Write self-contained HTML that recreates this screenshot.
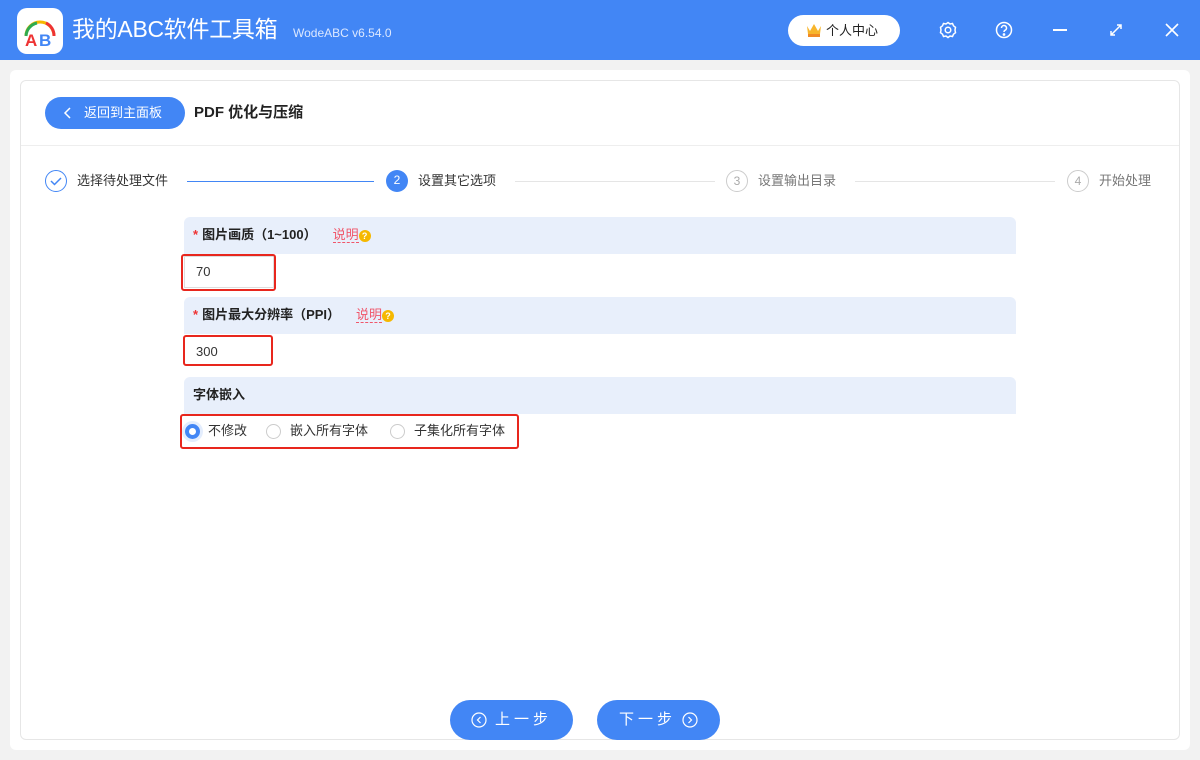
<!DOCTYPE html>
<html><head><meta charset="utf-8"><style>
*{margin:0;padding:0;box-sizing:border-box}
body{width:1200px;height:760px;background:#f2f2f2;font-family:"Liberation Sans","Noto Sans CJK SC",sans-serif;position:relative;overflow:hidden;color:#333}
.top{position:absolute;left:0;top:0;width:1200px;height:60px;background:#4286f5}
.abs{position:absolute;line-height:1.2}
.panel{position:absolute;left:10px;top:70px;width:1180px;height:680px;background:#fff;border-radius:6px}
.card{position:absolute;left:20px;top:80px;width:1160px;height:660px;border:1px solid #e6e6e6;border-radius:6px;background:#fff}
.sec{position:absolute;left:184px;width:832px;height:37px;background:#e8effb;border-radius:6px 6px 0 0;font-size:13px;font-weight:bold;padding:10px 0 0 9px;color:#222;line-height:1.2}
.sec .st{color:#e33;margin-right:4px}
.sec .sm{color:#f0566a;font-weight:normal;border-bottom:1px dashed #f0566a;margin-left:16px}
.q{display:inline-block;width:12px;height:12px;border-radius:50%;background:#f5b800;color:#fff;font-size:9px;text-align:center;line-height:12px;vertical-align:middle}
.red{position:absolute;border:2px solid #e8261d;border-radius:3px}
.inp{font-size:13px;color:#333}
.circ{position:absolute;width:22px;height:22px;border-radius:50%;font-size:12px;text-align:center;line-height:20px}
.step{position:absolute;top:173px;font-size:13px;line-height:16px}
.btn{position:absolute;top:700px;height:40px;width:123px;border-radius:20px;background:#4286f5;color:#fff;font-size:15px;line-height:40px;letter-spacing:4px}
.radio{position:absolute;top:424px;width:15px;height:15px;border-radius:50%;border:1px solid #ccc}
</style></head><body>
<div class="top"></div>
<div class="abs" style="left:17px;top:8px;width:46px;height:46px;background:#fff;border-radius:10px">
<svg width="46" height="46"><path d="M9 28 A14 14 0 0 1 37 28" fill="none" stroke="#f5b800" stroke-width="3"/><path d="M9 28 A14 14 0 0 1 20 15" fill="none" stroke="#2eab4f" stroke-width="3"/><path d="M29 15 A14 14 0 0 1 37 28" fill="none" stroke="#e33" stroke-width="3"/><text x="8" y="38" font-size="17" font-weight="bold" fill="#e33" font-family="Liberation Sans">A</text><text x="22" y="38" font-size="17" font-weight="bold" fill="#4286f5" font-family="Liberation Sans">B</text></svg></div>
<div class="abs" style="left:72px;top:16px;font-size:23px;color:#fff;letter-spacing:-0.3px">我的ABC软件工具箱</div>
<div class="abs" style="left:293px;top:26px;font-size:12px;color:#dce8ff">WodeABC v6.54.0</div>
<div class="abs" style="left:788px;top:15px;width:112px;height:31px;background:#fff;border-radius:16px;font-size:13px;line-height:31px;padding-left:38px;color:#222">个人中心</div>
<div class="abs" style="left:806px;top:23px;width:16px;height:14px"><svg width="16" height="14"><path d="M1 3 L4 8 L8 1 L12 8 L15 3 L14 11 L2 11Z" fill="#f7b52c"/><rect x="2" y="11" width="12" height="3" fill="#f08a24"/></svg></div>
<svg class="abs" style="left:938px;top:20px" width="20" height="20" fill="none" stroke="#fff" stroke-width="1.5"><circle cx="10" cy="10" r="2.8"/><path d="M10 2.5l2 1.5 2.5-.5 1 2.3 2 1.5-.5 2.7.5 2.7-2 1.5-1 2.3-2.5-.5-2 1.5-2-1.5-2.5.5-1-2.3-2-1.5.5-2.7-.5-2.7 2-1.5 1-2.3 2.5.5z"/></svg>
<svg class="abs" style="left:994px;top:20px" width="20" height="20" fill="none" stroke="#fff" stroke-width="1.5"><circle cx="10" cy="10" r="7.5"/><path d="M7.5 8a2.5 2.5 0 1 1 3.5 2.3c-.8.4-1 .9-1 1.7"/><circle cx="10" cy="14.5" r=".6" fill="#fff"/></svg>
<div class="abs" style="left:1053px;top:29px;width:14px;height:2px;background:#fff"></div>
<svg class="abs" style="left:1108px;top:22px" width="16" height="16" stroke="#fff" stroke-width="1.5" fill="none"><path d="M3 13L13 3M9 3h4v4M3 9v4h4"/></svg>
<svg class="abs" style="left:1164px;top:22px" width="16" height="16" stroke="#fff" stroke-width="1.6"><path d="M2 2L14 14M14 2L2 14"/></svg>
<div class="panel"></div>
<div class="card"></div>
<div class="abs" style="left:45px;top:97px;width:140px;height:32px;background:#4286f5;border-radius:16px;color:#fff;font-size:13px;line-height:32px;padding-left:39px">返回到主面板</div>
<svg class="abs" style="left:63px;top:106px" width="10" height="14" stroke="#fff" stroke-width="1.5" fill="none"><path d="M7 2L2 7L7 12"/></svg>
<div class="abs" style="left:194px;top:104px;font-size:15px;font-weight:bold;color:#222">PDF 优化与压缩</div>
<div class="abs" style="left:21px;top:145px;width:1158px;height:1px;background:#eee"></div>
<div class="circ" style="left:45px;top:170px;border:1px solid #4286f5"><svg width="20" height="20" stroke="#4286f5" stroke-width="1.5" fill="none"><path d="M5 10l3.5 3.5L15 7"/></svg></div>
<div class="step" style="left:77px">选择待处理文件</div>
<div class="abs" style="left:187px;top:181px;width:187px;height:1px;background:#4286f5"></div>
<div class="circ" style="left:386px;top:170px;background:#4286f5;color:#fff">2</div>
<div class="step" style="left:418px">设置其它选项</div>
<div class="abs" style="left:515px;top:181px;width:200px;height:1px;background:#e5e5e5"></div>
<div class="circ" style="left:726px;top:170px;border:1px solid #ccc;color:#aaa">3</div>
<div class="step" style="left:758px;color:#777">设置输出目录</div>
<div class="abs" style="left:855px;top:181px;width:200px;height:1px;background:#e5e5e5"></div>
<div class="circ" style="left:1067px;top:170px;border:1px solid #ccc;color:#aaa">4</div>
<div class="step" style="left:1099px;color:#777">开始处理</div>

<div class="sec" style="top:217px"><span class="st">*</span>图片画质（1~100）<span class="sm">说明</span><span class="q">?</span></div>
<div class="abs" style="left:184px;top:256px;width:90px;height:32px;border:1px solid #ddd"></div>
<div class="red" style="left:181px;top:254px;width:95px;height:37px"></div>
<div class="abs inp" style="left:196px;top:264px">70</div>

<div class="sec" style="top:297px"><span class="st">*</span>图片最大分辨率（PPI）<span class="sm">说明</span><span class="q">?</span></div>
<div class="red" style="left:183px;top:335px;width:90px;height:31px"></div>
<div class="abs inp" style="left:196px;top:344px">300</div>

<div class="sec" style="top:377px">字体嵌入</div>
<div class="red" style="left:180px;top:414px;width:339px;height:35px"></div>
<div class="radio" style="left:185px;border:4px solid #4286f5;box-shadow:0 0 0 3px #e3edfd"></div>
<div class="abs" style="left:208px;top:423px;font-size:13px">不修改</div>
<div class="radio" style="left:266px"></div>
<div class="abs" style="left:290px;top:423px;font-size:13px">嵌入所有字体</div>
<div class="radio" style="left:390px"></div>
<div class="abs" style="left:414px;top:423px;font-size:13px">子集化所有字体</div>

<div class="btn" style="left:450px;padding-left:45px">上一步</div>
<div class="btn" style="left:597px;padding-left:22px">下一步</div>
<svg class="abs" style="left:471px;top:712px" width="16" height="16" stroke="#fff" stroke-width="1.2" fill="none"><circle cx="8" cy="8" r="7"/><path d="M9.5 5L6.5 8l3 3"/></svg>
<svg class="abs" style="left:682px;top:712px" width="16" height="16" stroke="#fff" stroke-width="1.2" fill="none"><circle cx="8" cy="8" r="7"/><path d="M6.5 5l3 3-3 3"/></svg>
</body></html>
